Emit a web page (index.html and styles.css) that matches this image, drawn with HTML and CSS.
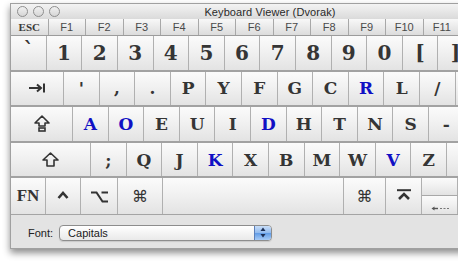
FILE: index.html
```html
<!DOCTYPE html>
<html>
<head>
<meta charset="utf-8">
<title>Keyboard Viewer (Dvorak)</title>
<link rel="stylesheet" href="styles.css">
</head>
<body>
<div class="window">
  <div class="titlebar">
    <div class="lights"><i></i><i></i><i></i></div>
    <div class="title">Keyboard Viewer (Dvorak)</div>
    <div></div>
  </div>

  <div class="keyboard">
    <div class="row frow">
      <div class="key esc">ESC</div>
      <div class="key">F1</div><div class="key">F2</div><div class="key">F3</div>
      <div class="key">F4</div><div class="key">F5</div><div class="key">F6</div>
      <div class="key">F7</div><div class="key">F8</div><div class="key">F9</div>
      <div class="key">F10</div><div class="key">F11</div><div class="key"></div>
    </div>

    <div class="row num">
      <div class="key">`</div>
      <div class="key">1</div><div class="key">2</div><div class="key">3</div>
      <div class="key">4</div><div class="key">5</div><div class="key">6</div>
      <div class="key">7</div><div class="key">8</div><div class="key">9</div>
      <div class="key">0</div><div class="key">[</div><div class="key">]</div>
      <div class="key wide-del"></div>
    </div>

    <div class="row">
      <div class="key tab">
        <svg width="18" height="10" viewBox="0 0 18 10"><path d="M1 5H13M9 1.5L13 5L9 8.5" fill="none" stroke="#333" stroke-width="2"/><path d="M16 0.5V9.5" stroke="#333" stroke-width="2"/></svg>
      </div>
      <div class="key">'</div><div class="key">,</div><div class="key">.</div>
      <div class="key">P</div><div class="key">Y</div><div class="key">F</div>
      <div class="key">G</div><div class="key">C</div><div class="key blue">R</div>
      <div class="key">L</div><div class="key">/</div><div class="key"></div>
    </div>

    <div class="row">
      <div class="key caps">
        <svg width="16" height="17" viewBox="0 0 16 17"><path d="M8 1L15 8H11V11H5V8H1Z" fill="none" stroke="#333" stroke-width="1.6" stroke-linejoin="round"/><rect x="5" y="13" width="6" height="3" fill="none" stroke="#333" stroke-width="1.6"/></svg>
      </div>
      <div class="key blue">A</div><div class="key blue">O</div><div class="key">E</div>
      <div class="key">U</div><div class="key">I</div><div class="key blue">D</div>
      <div class="key">H</div><div class="key">T</div><div class="key">N</div>
      <div class="key">S</div><div class="key">-</div><div class="key"></div>
    </div>

    <div class="row">
      <div class="key shift">
        <svg width="17" height="15" viewBox="0 0 17 15"><path d="M8.5 1L16 8H12V14H5V8H1Z" fill="none" stroke="#333" stroke-width="1.6" stroke-linejoin="round"/></svg>
      </div>
      <div class="key">;</div><div class="key">Q</div><div class="key">J</div>
      <div class="key blue">K</div><div class="key">X</div><div class="key">B</div>
      <div class="key">M</div><div class="key">W</div><div class="key blue">V</div>
      <div class="key">Z</div><div class="key"></div>
    </div>

    <div class="row mods">
      <div class="key fn">FN</div>
      <div class="key ctrl">
        <svg width="12" height="8" viewBox="0 0 12 8"><path d="M1.5 7L6 2L10.5 7" fill="none" stroke="#333" stroke-width="2.6"/></svg>
      </div>
      <div class="key opt">
        <svg width="17" height="12" viewBox="0 0 17 12"><path d="M0 1.5H5.5L11.5 10.5H17M10.5 1.5H17" fill="none" stroke="#333" stroke-width="2"/></svg>
      </div>
      <div class="key cmd">⌘</div>
      <div class="key space"></div>
      <div class="key cmd rcmd">⌘</div>
      <div class="key enter">
        <svg width="16" height="11" viewBox="0 0 16 11"><path d="M1 1.2H15" stroke="#333" stroke-width="2"/><path d="M3 10L8 5L13 10" fill="none" stroke="#333" stroke-width="2.6"/></svg>
      </div>
      <div class="arrows">
        <div class="key up"></div>
        <div class="arrow-row">
          <div class="key left">
            <svg width="18" height="5" viewBox="0 0 18 5"><path d="M3.5 0.5L0.5 2.5L3.5 4.5Z" fill="#555"/><path d="M3 2.5H7" stroke="#555" stroke-width="1.4"/><path d="M9 2.5H18" stroke="#777" stroke-width="1.2" stroke-dasharray="2 1.5"/></svg>
          </div>
          <div class="key down"></div>
        </div>
      </div>
    </div>
  </div>

  <div class="panel">
    <span class="label">Font:</span>
    <div class="popup">
      <span class="value">Capitals</span>
      <span class="stepper">
        <svg width="6" height="11" viewBox="0 0 6 11"><path d="M3 0.5L5.5 4H0.5Z" fill="#1d2f55"/><path d="M3 10.5L5.5 7H0.5Z" fill="#1d2f55"/></svg>
      </span>
    </div>
  </div>
</div>
</body>
</html>
```

FILE: styles.css
```css
html, body { margin: 0; background: #fff; overflow: hidden; height: 100%; }
body { padding: 3px 0 0 10px; font-family: "Liberation Sans", Arial, sans-serif; }

.window {
  width: 518px;
  background: #e2e2e2;
  border: 1px solid #a0a0a0;
  box-shadow: 0 4px 7px rgba(0,0,0,0.45);
}

/* title bar */
.titlebar {
  height: 15px;
  display: grid;
  grid-template-columns: 1fr auto 1fr;
  align-items: center;
  background: linear-gradient(#f3f3f3, #dadada);
}
.lights { display: flex; gap: 5px; padding-left: 6px; }
.lights i {
  display: block;
  width: 11px; height: 11px;
  border-radius: 50%;
  border: 1px solid #8e8e8e;
  background: linear-gradient(#f0f0f0, #d6d6d6);
  box-sizing: border-box;
}
.title { font-size: 11px; color: #2a2a2a; letter-spacing: 0.1px; }

/* keyboard */
.keyboard { background: #9a9a9a; }
.row {
  display: flex;
  height: 35.6px;
  box-sizing: border-box;
  border-bottom: 2px solid #a2a2a2;
}
.key {
  flex: none;
  width: 35.6px;
  box-sizing: border-box;
  border-right: 1px solid #b0b0b0;
  background: linear-gradient(#fbfbfb, #f1f1f1 45%, #e3e3e3);
  display: flex;
  align-items: center;
  justify-content: center;
  font-family: "DejaVu Serif", "Liberation Serif", serif;
  font-weight: bold;
  font-size: 17px;
  color: #353535;
}
.blue { color: #1010c4; }

.frow { height: 17px; border-bottom: 1px solid #9c9c9c; }
.frow .key {
  width: 37.5px;
  font-family: "Liberation Sans", Arial, sans-serif;
  font-weight: normal;
  font-size: 11px;
  color: #4a4a4a;
  background: linear-gradient(#f8f8f8, #dcdcdc);
  border-right-color: #a8a8a8;
}
.frow .esc {
  font-family: "Liberation Serif", serif;
  font-weight: bold;
  font-size: 11px;
  color: #3a3a3a;
}

.num .key { font-size: 20px; }
.num .key:first-child { width: 35.75px; align-items: flex-start; padding-top: 2px; }
.wide-del { width: 60px !important; }

.tab { width: 53px; }
.caps { width: 62px; }
.shift { width: 80px; }

.mods { border-bottom: none; }
.fn { width: 35px; font-family: "Liberation Serif", serif; font-size: 17px; }
.ctrl { width: 35px; padding-bottom: 3px; }
.opt { width: 37px; padding-top: 2px; }
.cmd {
  width: 45px;
  font-family: "DejaVu Sans", sans-serif;
  font-weight: normal;
  font-size: 16px;
  color: #333;
}
.rcmd { width: 42px; }
.space { width: 181px; }
.enter { width: 36px; padding-bottom: 4px; }

.arrows { display: flex; flex-direction: column; width: 120px; }
.up { width: 36px; height: 18px; border-bottom: 1px solid #a8a8a8; }
.arrow-row { display: flex; flex: 1; }
.arrow-row .key { height: auto; width: 36px; }
.left { align-items: flex-end; padding-bottom: 3px; }

/* bottom panel */
.panel {
  height: 34px;
  box-sizing: border-box;
  border-top: 1px solid #a4a4a4;
  background: #e3e3e3;
  display: flex;
  align-items: center;
  padding: 3px 0 0 17px;
  gap: 6px;
}
.label { font-size: 11px; color: #222; }
.popup {
  width: 213px;
  height: 16px;
  box-sizing: border-box;
  border: 1px solid #8d8d8d;
  border-radius: 4px;
  background: linear-gradient(#ffffff, #f4f4f4 50%, #e9e9e9);
  display: flex;
  align-items: center;
  justify-content: space-between;
  overflow: hidden;
  box-shadow: 0 1px 1px rgba(0,0,0,0.12);
}
.value { font-size: 11px; color: #1a1a1a; padding-left: 8px; }
.stepper {
  width: 16px;
  height: 100%;
  display: flex;
  align-items: center;
  justify-content: center;
  border-left: 1px solid #5b7fb8;
  background: linear-gradient(#c9def8, #8fb9ee 50%, #5f9be6 51%, #a7cbf6);
}
```
